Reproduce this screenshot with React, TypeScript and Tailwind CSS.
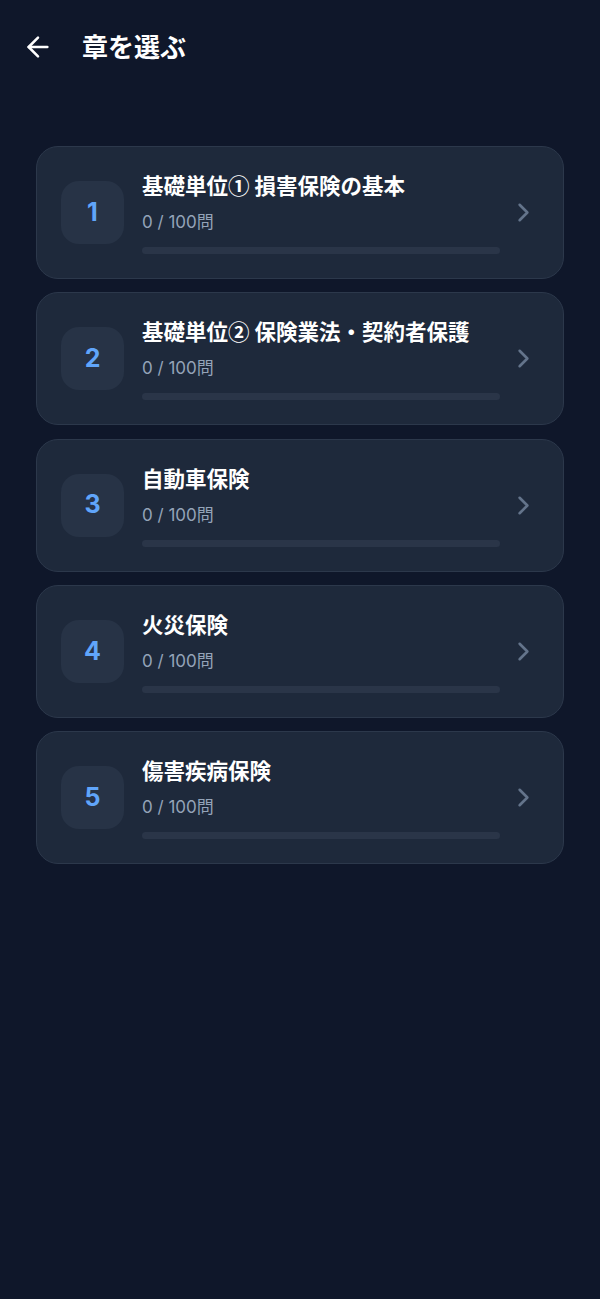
import { ArrowLeft, ChevronRight } from 'lucide-react';

interface Chapter {
  id: number;
  title: string;
  answered: number;
  total: number;
}

const chapters: Chapter[] = [
  { id: 1, title: '基礎単位① 損害保険の基本', answered: 0, total: 100 },
  { id: 2, title: '基礎単位② 保険業法・契約者保護', answered: 0, total: 100 },
  { id: 3, title: '自動車保険', answered: 0, total: 100 },
  { id: 4, title: '火災保険', answered: 0, total: 100 },
  { id: 5, title: '傷害疾病保険', answered: 0, total: 100 },
];

function ChapterCard({ chapter }: { chapter: Chapter }) {
  const pct = chapter.total > 0 ? (chapter.answered / chapter.total) * 100 : 0;

  return (
    <button
      type="button"
      className="flex w-full items-center rounded-[22px] border border-[#2c384b] bg-[#1e293b] p-6 text-left"
    >
      <div className="flex h-[63px] w-[63px] shrink-0 items-center justify-center rounded-[18px] bg-[#273346]">
        <span className="text-[25px] font-bold text-[#60a5fa]">{chapter.id}</span>
      </div>

      <div className="ml-[18px] flex min-w-0 flex-1 flex-col">
        <p className="whitespace-nowrap font-['Noto_Sans_CJK_JP',sans-serif] text-[21.5px] font-bold leading-[28px] text-white">
          {chapter.title}
        </p>
        <p className="mt-[11px] text-[17px] leading-[24px] text-[#94a3b8]">
          {chapter.answered} / {chapter.total}問
        </p>
        <div className="mt-[13px] h-[7px] w-full rounded-full bg-[#2a3548]">
          <div className="h-full rounded-full bg-[#60a5fa]" style={{ width: `${pct}%` }} />
        </div>
      </div>

      <ChevronRight className="ml-2 shrink-0 text-[#64748b]" size={31} strokeWidth={2} />
    </button>
  );
}

export default function App() {
  return (
    <div
      className="min-h-[1299px] w-full bg-[#0f172a]"
      style={{ fontFamily: 'Inter, "Noto Sans CJK JP", "Noto Sans", sans-serif' }}
    >
      <header className="flex h-[94px] items-center px-[22px]">
        <button type="button" className="flex h-8 w-8 items-center justify-center text-white">
          <ArrowLeft size={32} strokeWidth={1.9} />
        </button>
        <h1 className="ml-[28px] text-[26px] font-bold text-white">章を選ぶ</h1>
      </header>

      <div className="flex flex-col gap-[13.3px] px-9 pt-[52px]">
        {chapters.map((c) => (
          <ChapterCard key={c.id} chapter={c} />
        ))}
      </div>
    </div>
  );
}
